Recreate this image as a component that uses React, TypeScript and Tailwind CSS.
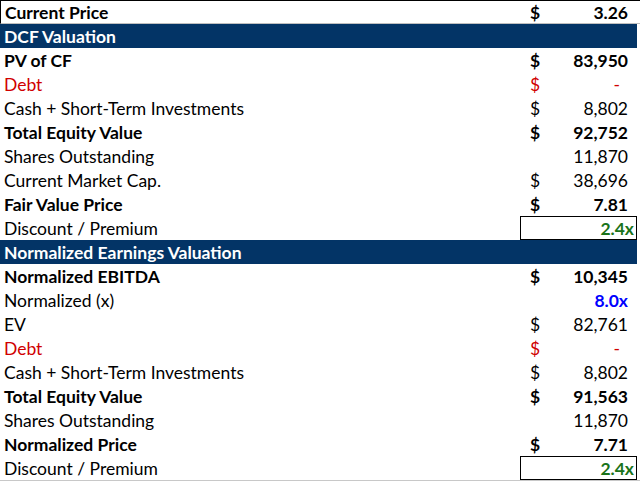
type Row = {
  label: string;
  value?: string;
  dollar?: boolean;
  bold?: boolean;
  tone?: "red" | "green" | "blue";
  header?: boolean;
  boxed?: boolean;
  top?: boolean;
};

const rows: Row[] = [
  { label: "Current Price", value: "3.26", dollar: true, bold: true, top: true },
  { label: "DCF Valuation", header: true },
  { label: "PV of CF", value: "83,950", dollar: true, bold: true },
  { label: "Debt", value: "-", dollar: true, tone: "red" },
  { label: "Cash + Short-Term Investments", value: "8,802", dollar: true },
  { label: "Total Equity Value", value: "92,752", dollar: true, bold: true },
  { label: "Shares Outstanding", value: "11,870" },
  { label: "Current Market Cap.", value: "38,696", dollar: true },
  { label: "Fair Value Price", value: "7.81", dollar: true, bold: true },
  { label: "Discount / Premium", value: "2.4x", tone: "green", boxed: true },
  { label: "Normalized Earnings Valuation", header: true },
  { label: "Normalized EBITDA", value: "10,345", dollar: true, bold: true },
  { label: "Normalized (x)", value: "8.0x", tone: "blue" },
  { label: "EV", value: "82,761", dollar: true },
  { label: "Debt", value: "-", dollar: true, tone: "red" },
  { label: "Cash + Short-Term Investments", value: "8,802", dollar: true },
  { label: "Total Equity Value", value: "91,563", dollar: true, bold: true },
  { label: "Shares Outstanding", value: "11,870" },
  { label: "Normalized Price", value: "7.71", dollar: true, bold: true },
  { label: "Discount / Premium", value: "2.4x", tone: "green", boxed: true },
];

function ValuationRow({ row }: { row: Row }) {
  if (row.header) {
    return (
      <div className="h-[24px] flex pr-[3px]">
        <div className="w-full bg-[#033466] flex items-center pl-[4px] pt-[1px] font-bold text-white">
          {row.label}
        </div>
      </div>
    );
  }

  const labelColor = row.tone === "red" ? "text-[#d00000]" : "text-black";
  const valueColor =
    row.tone === "red"
      ? "text-[#d00000] font-normal"
      : row.tone === "green"
      ? "text-[#1a731a] font-bold"
      : row.tone === "blue"
      ? "text-[#0000ff] font-bold"
      : "text-black";

  return (
    <div
      className={`h-[24px] flex ${row.bold ? "font-bold" : ""} ${
        row.top ? "border-t border-l border-black border-b border-b-[#bfbfbf]" : ""
      }`}
    >
      <div className={`flex-1 flex items-center pl-[4px] pt-[1px] ${labelColor}`}>{row.label}</div>
      <div
        className={`w-[117px] flex items-center justify-between pl-[10px] pt-[1px] ${
          row.boxed ? "border border-black pr-[2px]" : row.value === "-" ? "pr-[17px]" : "pr-[9px]"
        }`}
      >
        <span className={labelColor}>{row.dollar ? "$" : ""}</span>
        <span className={valueColor}>{row.value}</span>
      </div>
      <div className="w-[3px]" />
    </div>
  );
}

export default function App() {
  return (
    <div className="w-[640px] h-[481px] bg-white text-[17.5px] leading-none font-['Lato','Carlito',sans-serif] overflow-hidden">
      {rows.map((row, i) => (
        <ValuationRow key={i} row={row} />
      ))}
      <div className="h-[1px] bg-[#c8c8c8]" />
    </div>
  );
}
